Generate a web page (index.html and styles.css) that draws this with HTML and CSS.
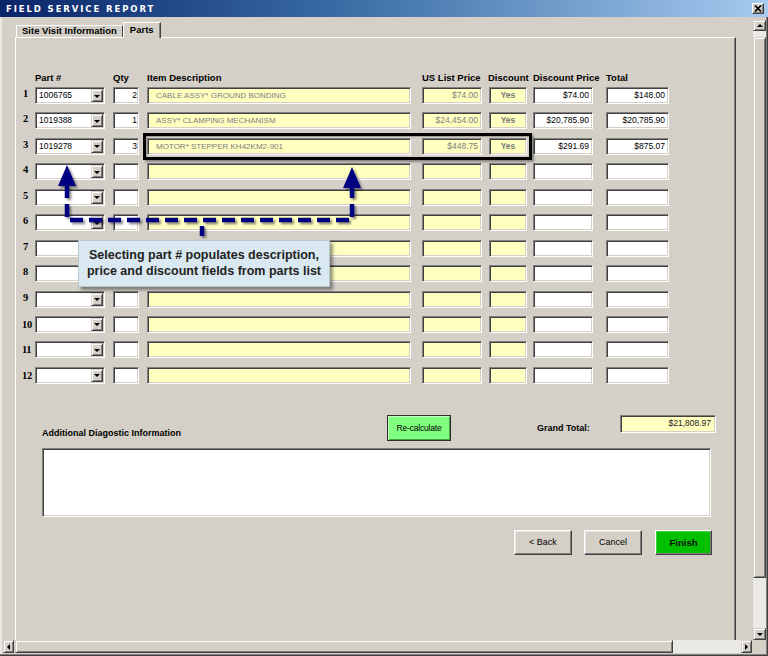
FILE: index.html
```html
<!DOCTYPE html>
<html>
<head>
<meta charset="utf-8">
<title>Field Service Report</title>
<link rel="stylesheet" href="styles.css">
</head>
<body>
<div class="window">
  <div class="titlebar">
    <span class="title">FIELD SERVICE REPORT</span>
    <span class="close"><svg width="8" height="7" viewBox="0 0 8 7"><path d="M1 0.5 L7 6.5 M7 0.5 L1 6.5" stroke="#000" stroke-width="1.7"/></svg></span>
  </div>
  <div class="main">
    <div class="viewport">
      <div class="tabs">
        <div class="tab">Site Visit Information</div>
        <div class="tab active">Parts</div>
      </div>
      <div class="panel">
        <div class="grid">
          <div class="row head">
            <div class="c-rn"></div>
            <div class="c-part">Part #</div>
            <div class="c-qty">Qty</div>
            <div class="c-desc">Item Description</div>
            <div class="c-list">US List Price</div>
            <div class="c-disc hd-disc">Discount</div>
            <div class="c-dp">Discount Price</div>
            <div class="c-tot">Total</div>
          </div>
          <div class="row">
            <div class="c-rn">1</div>
            <div class="c-part fld combo"><span class="val">1006765</span><span class="ddbtn"></span></div>
            <div class="c-qty fld num">2</div>
            <div class="c-desc fld yel">CABLE ASSY* GROUND BONDING</div>
            <div class="c-list fld yel num">$74.00</div>
            <div class="c-disc fld yel yes">Yes</div>
            <div class="c-dp fld num">$74.00</div>
            <div class="c-tot fld num">$148.00</div>
          </div>
          <div class="row">
            <div class="c-rn">2</div>
            <div class="c-part fld combo"><span class="val">1019388</span><span class="ddbtn"></span></div>
            <div class="c-qty fld num">1</div>
            <div class="c-desc fld yel">ASSY* CLAMPING MECHANISM</div>
            <div class="c-list fld yel num">$24,454.00</div>
            <div class="c-disc fld yel yes">Yes</div>
            <div class="c-dp fld num">$20,785.90</div>
            <div class="c-tot fld num">$20,785.90</div>
          </div>
          <div class="row">
            <div class="c-rn">3</div>
            <div class="c-part fld combo"><span class="val">1019278</span><span class="ddbtn"></span></div>
            <div class="c-qty fld num">3</div>
            <div class="c-desc fld yel">MOTOR* STEPPER KH42KM2-901</div>
            <div class="c-list fld yel num">$448.75</div>
            <div class="c-disc fld yel yes">Yes</div>
            <div class="c-dp fld num">$291.69</div>
            <div class="c-tot fld num">$875.07</div>
          </div>
          <div class="row">
            <div class="c-rn">4</div>
            <div class="c-part fld combo"><span class="val"></span><span class="ddbtn"></span></div>
            <div class="c-qty fld"></div>
            <div class="c-desc fld yel"></div>
            <div class="c-list fld yel"></div>
            <div class="c-disc fld yel"></div>
            <div class="c-dp fld"></div>
            <div class="c-tot fld"></div>
          </div>
          <div class="row">
            <div class="c-rn">5</div>
            <div class="c-part fld combo"><span class="val"></span><span class="ddbtn"></span></div>
            <div class="c-qty fld"></div>
            <div class="c-desc fld yel"></div>
            <div class="c-list fld yel"></div>
            <div class="c-disc fld yel"></div>
            <div class="c-dp fld"></div>
            <div class="c-tot fld"></div>
          </div>
          <div class="row">
            <div class="c-rn">6</div>
            <div class="c-part fld combo"><span class="val"></span><span class="ddbtn"></span></div>
            <div class="c-qty fld"></div>
            <div class="c-desc fld yel"></div>
            <div class="c-list fld yel"></div>
            <div class="c-disc fld yel"></div>
            <div class="c-dp fld"></div>
            <div class="c-tot fld"></div>
          </div>
          <div class="row">
            <div class="c-rn">7</div>
            <div class="c-part fld combo"><span class="val"></span><span class="ddbtn"></span></div>
            <div class="c-qty fld"></div>
            <div class="c-desc fld yel"></div>
            <div class="c-list fld yel"></div>
            <div class="c-disc fld yel"></div>
            <div class="c-dp fld"></div>
            <div class="c-tot fld"></div>
          </div>
          <div class="row">
            <div class="c-rn">8</div>
            <div class="c-part fld combo"><span class="val"></span><span class="ddbtn"></span></div>
            <div class="c-qty fld"></div>
            <div class="c-desc fld yel"></div>
            <div class="c-list fld yel"></div>
            <div class="c-disc fld yel"></div>
            <div class="c-dp fld"></div>
            <div class="c-tot fld"></div>
          </div>
          <div class="row">
            <div class="c-rn">9</div>
            <div class="c-part fld combo"><span class="val"></span><span class="ddbtn"></span></div>
            <div class="c-qty fld"></div>
            <div class="c-desc fld yel"></div>
            <div class="c-list fld yel"></div>
            <div class="c-disc fld yel"></div>
            <div class="c-dp fld"></div>
            <div class="c-tot fld"></div>
          </div>
          <div class="row">
            <div class="c-rn rn2">10</div>
            <div class="c-part fld combo"><span class="val"></span><span class="ddbtn"></span></div>
            <div class="c-qty fld"></div>
            <div class="c-desc fld yel"></div>
            <div class="c-list fld yel"></div>
            <div class="c-disc fld yel"></div>
            <div class="c-dp fld"></div>
            <div class="c-tot fld"></div>
          </div>
          <div class="row">
            <div class="c-rn rn2">11</div>
            <div class="c-part fld combo"><span class="val"></span><span class="ddbtn"></span></div>
            <div class="c-qty fld"></div>
            <div class="c-desc fld yel"></div>
            <div class="c-list fld yel"></div>
            <div class="c-disc fld yel"></div>
            <div class="c-dp fld"></div>
            <div class="c-tot fld"></div>
          </div>
          <div class="row">
            <div class="c-rn rn2">12</div>
            <div class="c-part fld combo"><span class="val"></span><span class="ddbtn"></span></div>
            <div class="c-qty fld"></div>
            <div class="c-desc fld yel"></div>
            <div class="c-list fld yel"></div>
            <div class="c-disc fld yel"></div>
            <div class="c-dp fld"></div>
            <div class="c-tot fld"></div>
          </div>
        </div>

        <div class="bottom">
          <div class="btop">
            <div class="adlabel">Additional Diagostic Information</div>
            <div class="btn recalc">Re-calculate</div>
            <div class="gtlabel">Grand Total:</div>
            <div class="fld yel num gt">$21,808.97</div>
          </div>
          <div class="fld textarea"></div>
          <div class="actions">
            <div class="btn">&lt; Back</div>
            <div class="btn cancel">Cancel</div>
            <div class="btn finish">Finish</div>
          </div>
        </div>
      </div>
    </div>
    <div class="vscroll">
      <div class="sb-btn v-up"><span class="tri-up"></span></div>
      <div class="sb-track t-top"></div>
      <div class="sb-thumb v-thumb"></div>
      <div class="sb-track t-fill"></div>
      <div class="sb-btn v-down"><span class="tri-down"></span></div>
    </div>
  </div>
  <div class="hscroll">
    <div class="sb-btn h-left"><span class="tri-left"></span></div>
    <div class="sb-thumb h-thumb"></div>
    <div class="sb-track h-fill"></div>
    <div class="sb-btn h-right"><span class="tri-right"></span></div>
    <div class="corner"></div>
  </div>

  <div class="highlight"></div>
  <svg class="arrows" width="768" height="656" viewBox="0 0 768 656">
    <defs>
      <filter id="sh" x="-20%" y="-20%" width="140%" height="140%">
        <feDropShadow dx="2" dy="2" stdDeviation="1.2" flood-color="#000" flood-opacity="0.45"/>
      </filter>
    </defs>
    <g filter="url(#sh)">
      <path d="M67 185 V220 H352 V187" fill="none" stroke="#000080" stroke-width="4.5" stroke-dasharray="13 6"/>
      <path d="M202 222 V240" fill="none" stroke="#000080" stroke-width="4.5" stroke-dasharray="10 4" stroke-dashoffset="-4"/>
      <polygon points="67,165 58,186 76,186" fill="#000080"/>
      <polygon points="352,167 343,188 361,188" fill="#000080"/>
    </g>
  </svg>
  <div class="callout">Selecting part # populates description,<br>price and discount fields from parts list</div>
</div>
</body>
</html>
```

FILE: styles.css
```css
* { box-sizing: border-box; }
html, body { margin: 0; padding: 0; }
body {
  width: 768px;
  height: 656px;
  overflow: hidden;
  background: #d4d0c8;
  font-family: "Liberation Sans", Arial, sans-serif;
  color: #000;
}

.window {
  position: relative;
  width: 768px;
  height: 656px;
  background: #d4d0c8;
  overflow: hidden;
  box-shadow: inset -1px -1px #404040, inset -2px -2px #808080, inset 2px 0 #ece9e4;
}

/* title bar */
.titlebar {
  height: 17px;
  background: linear-gradient(to right, #0a246a 0%, #3a6ea5 45%, #a6caf0 100%);
  display: flex;
  align-items: center;
  justify-content: space-between;
  padding: 0 4px 0 6px;
}
.title {
  color: #fff;
  font-family: "DejaVu Sans", sans-serif;
  font-weight: bold;
  font-size: 8.5px;
  letter-spacing: 1.9px;
  line-height: 10px;
}
.close {
  width: 12px;
  height: 11px;
  background: #d4d0c8;
  border: 1px solid;
  border-color: #fff #404040 #404040 #fff;
  box-shadow: inset -1px -1px #808080;
  display: flex;
  align-items: center;
  justify-content: center;
}

/* main area */
.main {
  display: flex;
  width: 766px;
  height: 623px;
}
.viewport {
  width: 752px;
  height: 623px;
  overflow: hidden;
}

/* tabs */
.tabs {
  display: flex;
  align-items: flex-end;
  height: 20px;
  padding-left: 16px;
}
.tab {
  height: 12px;
  padding: 0 5px;
  font-size: 9.5px;
  font-weight: bold;
  line-height: 9px;
  white-space: nowrap;
  border-top: 1px solid #fff;
  border-left: 1px solid #fff;
  border-right: 1px solid #404040;
}
.tab.active {
  height: 16px;
  margin-bottom: -1px;
  padding: 0 6px;
  line-height: 13px;
  position: relative;
  z-index: 1;
  background: #d4d0c8;
  box-shadow: inset -1px 0 #808080;
}

/* panel */
.panel {
  margin-left: 15px;
  width: 721px;
  height: 700px;
  border-top: 1px solid #fff;
  border-left: 1px solid #fff;
  border-right: 1px solid #404040;
  box-shadow: inset -1px 0 #808080;
}

.grid { padding: 34px 0 0 7px; }
.row { display: flex; height: 25.45px; }
.row.head {
  height: 15px;
  font-size: 9.5px;
  font-weight: bold;
  line-height: 12px;
  white-space: nowrap;
}

.c-rn {
  width: 12px;
  font-family: "Liberation Serif", "Times New Roman", serif;
  font-weight: bold;
  font-size: 10.5px;
  line-height: 12px;
  padding-top: 1px;
}
.rn2 { margin-left: -1px; width: 13px; padding-top: 3px; letter-spacing: -0.3px; }
.c-part { width: 70px; }
.c-qty { width: 26px; margin-left: 8px; }
.c-desc { width: 264px; margin-left: 8px; }
.c-list { width: 60px; margin-left: 11px; }
.c-disc { width: 38px; margin-left: 7px; }
.hd-disc { margin-left: 6px; width: 39px; }
.c-dp { width: 60px; margin-left: 6px; }
.c-tot { width: 63px; margin-left: 13px; }

/* sunken fields */
.fld {
  height: 17px;
  background: #fff;
  border: 1px solid;
  border-color: #808080 #fff #fff #808080;
  box-shadow: inset 1px 1px #404040, inset -1px -1px #d4d0c8;
  font-size: 8.5px;
  line-height: 15px;
  padding: 0 3px 0 3px;
  white-space: nowrap;
  overflow: hidden;
}
.yel { background: #ffffc0; color: #808080; }
.c-desc.fld { font-size: 8px; padding-left: 8px; }
.num { text-align: right; padding-right: 3px; }
.c-qty.num { padding-right: 1px; }
.yes { text-align: center; font-weight: bold; color: #7a7a7a; padding: 0; }

.combo {
  display: flex;
  padding: 1px;
}
.combo .val { flex: 1; padding-left: 2px; line-height: 13px; }
.ddbtn {
  width: 12px;
  height: 13px;
  background: #d4d0c8;
  border: 1px solid;
  border-color: #d4d0c8 #404040 #404040 #d4d0c8;
  box-shadow: inset 1px 1px #fff, inset -1px -1px #808080;
  display: flex;
  align-items: center;
  justify-content: center;
}
.ddbtn::after {
  content: "";
  border-left: 3px solid transparent;
  border-right: 3px solid transparent;
  border-top: 3px solid #000;
  margin-top: 1px;
}

/* bottom section */
.bottom {
  margin-top: 22.6px;
  padding-left: 26px;
}
.btop {
  display: flex;
  align-items: flex-start;
  height: 26px;
}
.adlabel {
  width: 345px;
  margin-top: 12px;
  font-size: 9px;
  font-weight: bold;
  line-height: 12px;
  white-space: nowrap;
}
.btn {
  height: 25px;
  background: #d4d0c8;
  border: 1px solid;
  border-color: #fff #404040 #404040 #fff;
  box-shadow: inset -1px -1px #808080, inset 1px 1px #e8e6e2;
  font-size: 9px;
  line-height: 23px;
  text-align: center;
  white-space: nowrap;
}
.recalc {
  width: 64px;
  height: 26px;
  background: #80ff80;
  border: 1px solid #303030;
  box-shadow: inset 1px 1px #c8ffc8, inset -1px -1px #40a040;
  font-size: 8.5px;
  letter-spacing: -0.2px;
  line-height: 24px;
}
.gtlabel {
  width: 83px;
  margin-left: 86px;
  margin-top: 7px;
  font-size: 9px;
  font-weight: bold;
  line-height: 12px;
  white-space: nowrap;
}
.gt {
  width: 96px;
  height: 18px;
  color: #202020;
  font-size: 8.5px;
  padding-right: 4px;
}
.textarea {
  width: 669px;
  height: 69px;
  margin-top: 7px;
}
.actions {
  display: flex;
  justify-content: flex-end;
  width: 670px;
  margin-top: 13px;
}
.actions .btn { width: 58px; }
.actions .cancel { margin-left: 12px; }
.actions .finish {
  width: 57px;
  margin-left: 13px;
  background: #00c000;
  font-weight: bold;
  font-size: 9.5px;
  color: #101010;
  box-shadow: inset -1px -1px #808080, inset 1px 1px #40d040;
}

/* scrollbars */
.vscroll {
  width: 13px;
  margin-left: 1px;
  padding-top: 3px;
  display: flex;
  flex-direction: column;
}
.sb-btn {
  background: #d4d0c8;
  border: 1px solid;
  border-color: #d4d0c8 #404040 #404040 #d4d0c8;
  box-shadow: inset 1px 1px #fff, inset -1px -1px #808080;
  display: flex;
  align-items: center;
  justify-content: center;
  flex: none;
}
.v-up { height: 11px; }
.v-down { height: 12px; }
.sb-track { background: #ebe9e4; }
.t-top { height: 6px; }
.t-fill { flex: 1; }
.sb-thumb {
  background: #d4d0c8;
  border: 1px solid;
  border-color: #d4d0c8 #404040 #404040 #d4d0c8;
  box-shadow: inset 1px 1px #fff, inset -1px -1px #808080;
  flex: none;
}
.v-thumb { height: 541px; }
.tri-up { border-left: 3px solid transparent; border-right: 3px solid transparent; border-bottom: 3px solid #000; }
.tri-down { border-left: 3px solid transparent; border-right: 3px solid transparent; border-top: 3px solid #000; }
.tri-left { border-top: 3px solid transparent; border-bottom: 3px solid transparent; border-right: 3px solid #000; }
.tri-right { border-top: 3px solid transparent; border-bottom: 3px solid transparent; border-left: 3px solid #000; }

.hscroll {
  display: flex;
  height: 13px;
  padding-left: 3px;
  width: 766px;
}
.hscroll .sb-btn { width: 11px; }
.h-thumb { width: 658px; margin-left: 1px; }
.h-fill { width: 68px; }
.corner { flex: 1; background: #d4d0c8; }

/* annotation overlay */
.highlight {
  position: absolute;
  left: 143px;
  top: 133px;
  width: 389px;
  height: 27px;
  border: 3px solid #000;
  box-shadow: 2px 2px 2px rgba(0,0,0,0.35), inset 1px 1px 1px rgba(0,0,0,0.25);
}
.arrows {
  position: absolute;
  left: 0;
  top: 0;
  pointer-events: none;
}
.callout {
  position: absolute;
  left: 78px;
  top: 240px;
  width: 252px;
  height: 47px;
  background: #dae9f1;
  border: 1px solid #b9c6cd;
  box-shadow: 3px 3px 3px rgba(0,0,0,0.4);
  padding-top: 6px;
  text-align: center;
  font-size: 12.5px;
  font-weight: bold;
  line-height: 16px;
  color: #222;
  white-space: nowrap;
}
```
